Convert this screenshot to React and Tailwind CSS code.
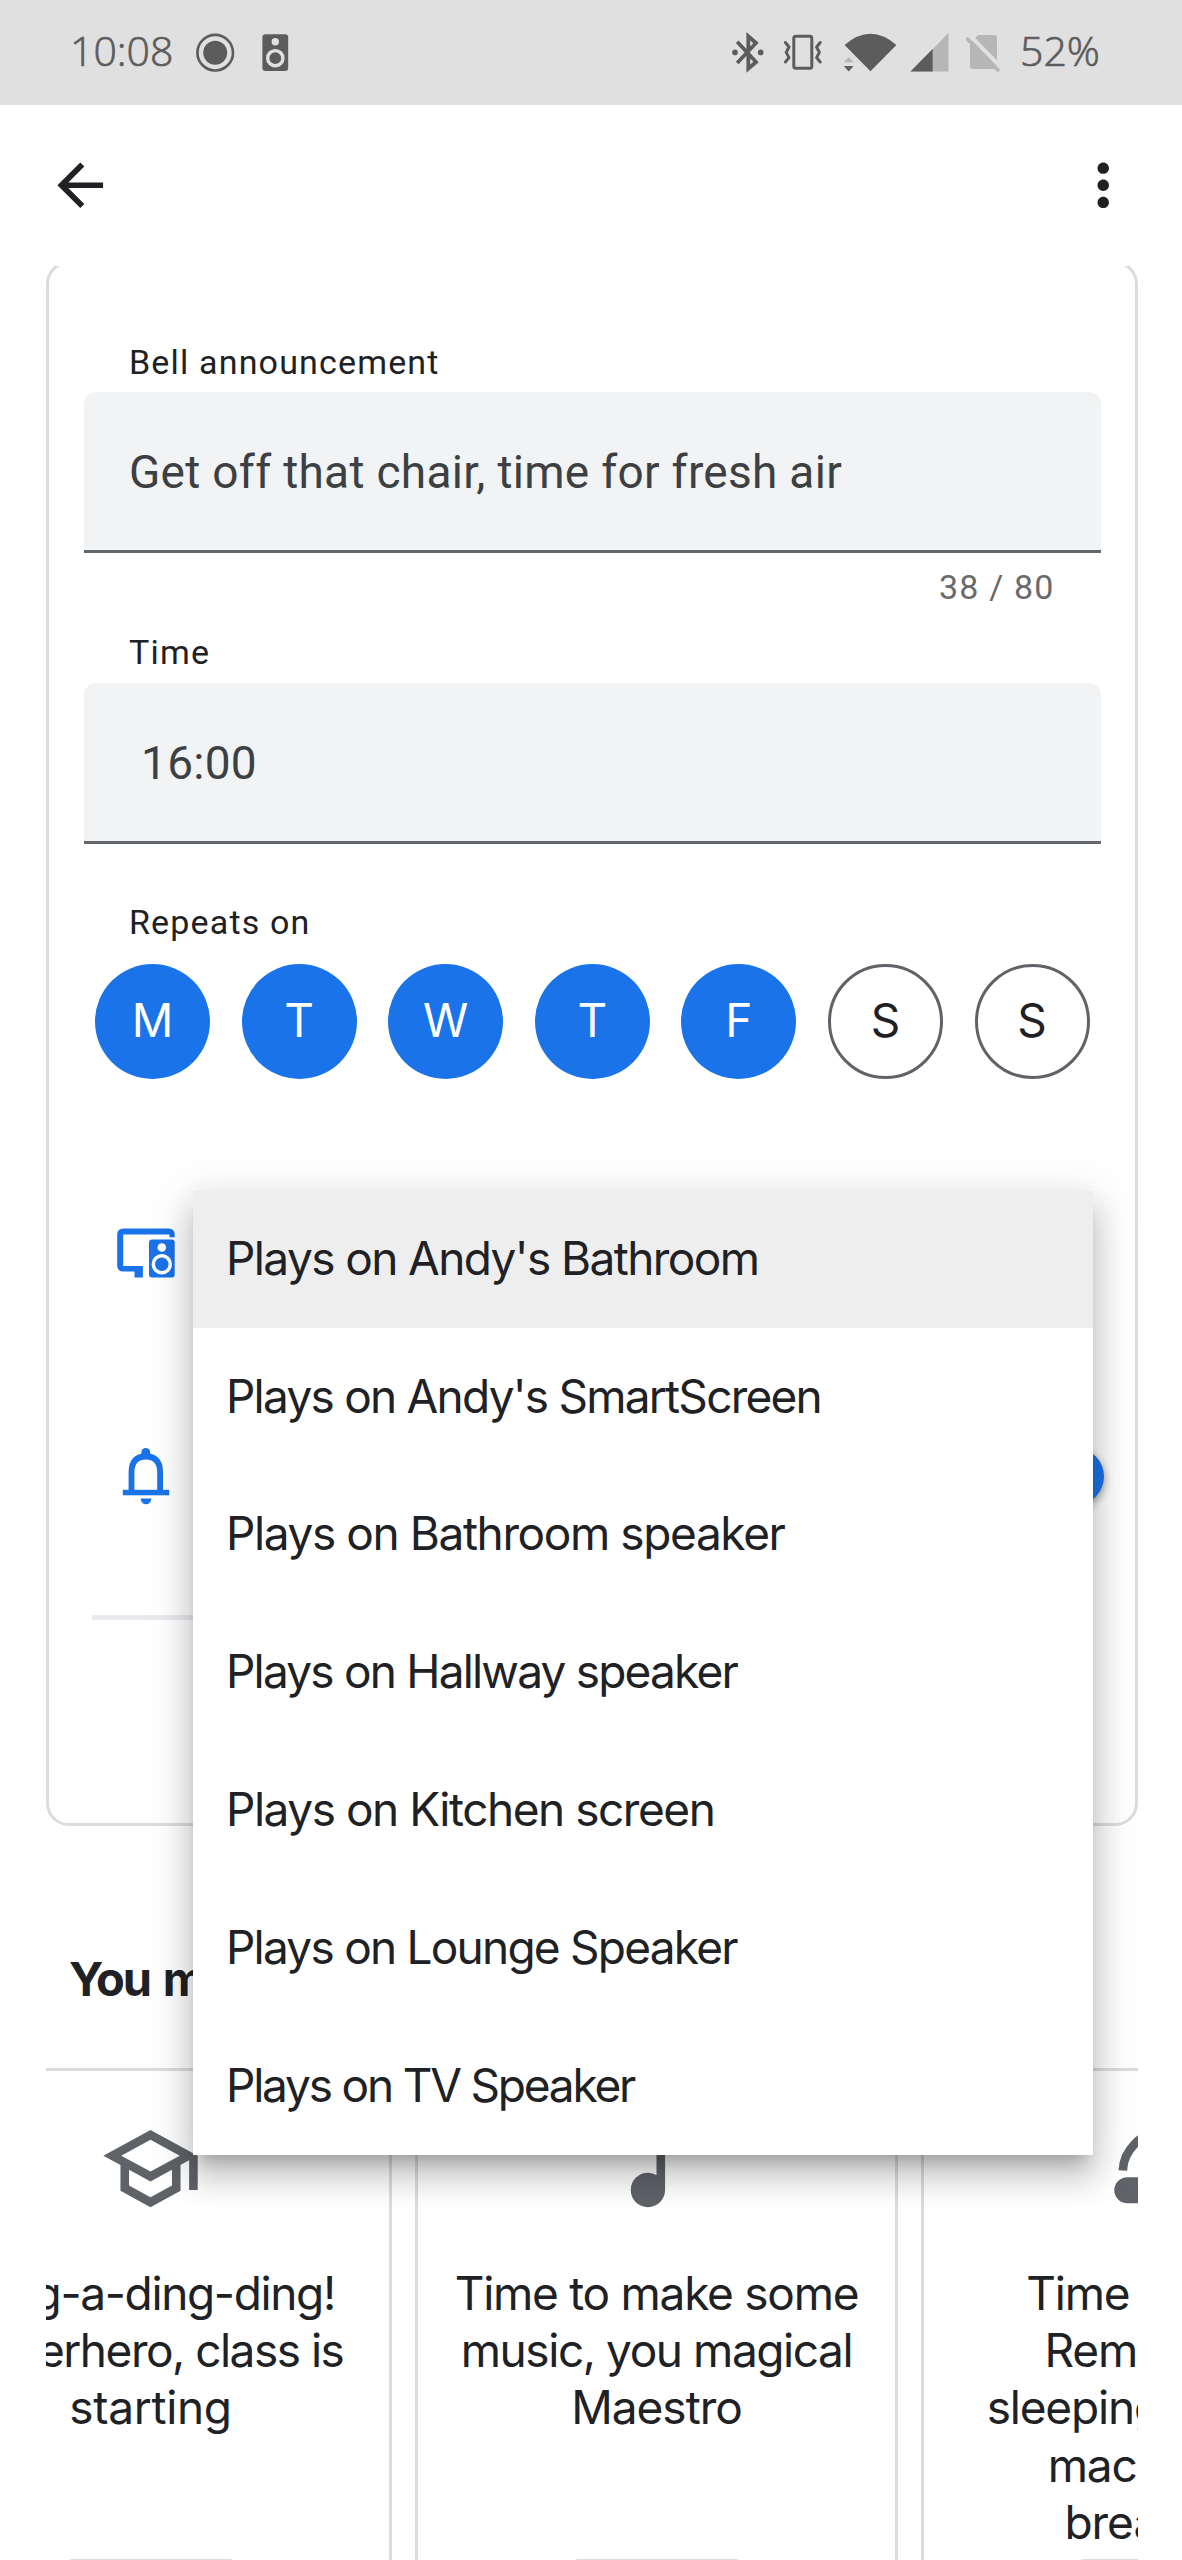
import React from "react";
import { MdArrowBack, MdMoreVert, MdOutlineSchool, MdMusicNote } from "react-icons/md";

const days = [
  { label: "M", on: true },
  { label: "T", on: true },
  { label: "W", on: true },
  { label: "T", on: true },
  { label: "F", on: true },
  { label: "S", on: false },
  { label: "S", on: false },
];

const devices = [
  { name: "Plays on Andy's Bathroom", cls: "tracking-[-1.6px] bg-[#eeeeee]" },
  { name: "Plays on Andy's SmartScreen", cls: "tracking-[-1.76px]" },
  { name: "Plays on Bathroom speaker", cls: "tracking-[-1.4px]" },
  { name: "Plays on Hallway speaker", cls: "tracking-[-1.8px]" },
  { name: "Plays on Kitchen screen", cls: "tracking-[-1.47px]" },
  { name: "Plays on Lounge Speaker", cls: "tracking-[-1.77px]" },
  { name: "Plays on TV Speaker", cls: "tracking-[-2.2px]" },
];

function StatusBar() {
  return (
    <header className="flex h-[105px] w-full items-center justify-between bg-[#e0e0e0] pb-[5px] pl-[70px] pr-[82px] font-['Open_Sans',sans-serif] text-[41px] leading-[60px] text-[#5c5c5c]">
      <div className="flex items-center">
        <span className="w-[124px] font-light [-webkit-text-stroke:0.7px_#5c5c5c]">10:08</span>
        <svg className="mt-[5px]" width="96" height="44" viewBox="194 31 96 44" fill="#5c5c5c">
          <circle cx="215.2" cy="52.7" r="17.8" fill="none" stroke="#5c5c5c" strokeWidth="2.6" />
          <circle cx="215.2" cy="52.7" r="12" />
          <rect x="262.4" y="34.2" width="25.8" height="36.8" rx="3.2" />
          <circle cx="275.3" cy="41.8" r="3.7" fill="#e0e0e0" />
          <circle cx="275.3" cy="58.2" r="7.6" stroke="#e0e0e0" strokeWidth="3.4" />
        </svg>
      </div>
      <div className="flex items-center">
        <svg className="mt-[5px]" width="290" height="44" viewBox="730 31 290 44" fill="#5c5c5c">
          <path d="M737.2 41.8 756 62 748.3 68.6V36.2L756 43 737.2 63" fill="none" stroke="#5c5c5c" strokeWidth="3.8" />
          <circle cx="735" cy="52.4" r="2.8" />
          <circle cx="760.7" cy="52.4" r="2.8" />
          <g fill="none" stroke="#5c5c5c" strokeWidth="3" strokeLinecap="round" strokeLinejoin="round">
            <rect x="793.8" y="36.3" width="18" height="32" rx="2" />
            <path d="M785.4 42.5 789 47 786.2 52.4 789 57.6 785.4 62" />
            <path d="M820.2 42.5 816.6 47 819.4 52.4 816.6 57.6 820.2 62" />
          </g>
          <path d="M870.5 71.3 844.6 45Q870.5 22.5 896.4 45Z" />
          <path d="M848.7 57 853.6 62.2H843.8Z" fill="#b6b6b6" />
          <path d="M848.7 71.4 853.6 66H843.8Z" />
          <path d="M910.5 71.5 948.5 33V71.5Z" fill="#b6b6b6" />
          <path d="M910.5 71.5 932.6 49V71.5Z" />
          <path d="M978 35H994q3 0 3 3V66q0 3-3 3H973q-3 0-3-3V43Z" fill="#b6b6b6" />
          <path d="M969 34.5 1003 69.5" stroke="#e0e0e0" strokeWidth="4" />
          <path d="M967.5 39 998 70" stroke="#b6b6b6" strokeWidth="3.6" strokeLinecap="round" />
        </svg>
        <span className="w-[80px] whitespace-nowrap font-light [-webkit-text-stroke:0.7px_#5c5c5c]">52%</span>
      </div>
    </header>
  );
}

function AppBar() {
  return (
    <nav className="flex h-[161px] items-center justify-between pl-[46px] pr-[45px] text-[#202124]">
      <MdArrowBack className="size-[68.5px]" />
      <MdMoreVert className="size-[68.5px]" />
    </nav>
  );
}

function Label({ children, className }) {
  return (
    <div className={`h-10 pl-[45px] text-[34px] leading-10 tracking-[1.17px] text-[#202124] ${className}`}>
      {children}
    </div>
  );
}

function Field({ children, className }) {
  return (
    <div
      className={`flex h-[161px] items-center rounded-t-[12px] border-b-[3.5px] border-[#63676b] bg-[#f1f3f4] pt-[3px] text-[46px] tracking-[0.29px] text-[#3c4043] ${className}`}
    >
      {children}
    </div>
  );
}

function SpeakerScreenIcon() {
  return (
    <svg width="58" height="50" viewBox="117.5 1228.5 58 50" fill="#1a73e8">
      <path d="M124 1229H169Q175.2 1229 175.2 1235V1237.8H170V1235H123.7V1266.5H143.4V1278H135V1272H124Q117.7 1272 117.7 1266V1235Q117.7 1229 124 1229Z" />
      <rect x="149.5" y="1240" width="25.7" height="38" rx="3" />
      <circle cx="162.3" cy="1248" r="4.3" fill="#fff" />
      <circle cx="162.3" cy="1264.8" r="8.5" stroke="#fff" strokeWidth="3.5" />
    </svg>
  );
}

function BellIcon() {
  return (
    <svg width="48" height="57" viewBox="122.5 1448.5 48 57" fill="#1a73e8">
      <path d="M132 1491V1472Q132.5 1457 146.3 1457Q160.2 1457 160.6 1472V1491" fill="none" stroke="#1a73e8" strokeWidth="5.8" />
      <path d="M141.8 1458V1453a4.5 4.5 0 0 1 9 0V1458Z" />
      <rect x="123.3" y="1490.3" width="46.4" height="5.5" />
      <path d="M141 1499H152Q151 1504.8 146.5 1504.8T141 1499Z" />
    </svg>
  );
}

function RestIcon() {
  return (
    <svg width="103" height="103" viewBox="0 0 103 103" fill="#5f6368">
      <path d="M11.8 53.5C12.5 34 30 14.500 52 14.500S90.5 34 91.2 53.5" fill="none" stroke="#5f6368" strokeWidth="8.6" />
      <rect x="3.3" y="60.2" width="96" height="26" rx="13" />
    </svg>
  );
}

function Suggestion({ icon, children }) {
  return (
    <article className="flex h-[640px] w-[483px] shrink-0 flex-col items-center rounded-[23px] border-[3px] border-[#dadce0] pt-[46px]">
      <div className="size-[103px] text-[103px] text-[#5f6368]">{icon}</div>
      <div className="mt-[45px] h-[294px] text-center text-[46px] leading-[57.4px] text-[#202124]">{children}</div>
      <div className="h-[100px] w-[180px] shrink-0 rounded-[12px] border-[3px] border-[#dadce0]" />
    </article>
  );
}

export default function App() {
  return (
    <div className="relative h-[2560px] w-[1182px] overflow-hidden bg-white font-[Roboto,sans-serif]">
      <StatusBar />
      <AppBar />

      <main className="mx-[46px] h-[2294px] w-[1091.5px] overflow-hidden">
        <section className="mt-[-5px] h-[1565px] rounded-[23px] border-[3px] border-[#dadce0] pl-[35px] pr-[34px] pt-[78px]">
          <Label>Bell announcement</Label>
          <Field className="mt-[10px] pl-[45px]">Get off that chair, time for fresh air</Field>
          <div className="mt-[14px] h-10 pr-[46px] text-right text-[34px] leading-10 tracking-[1.17px] text-[#6a6a6a]">
            38 / 80
          </div>

          <Label className="mt-[25px]">Time</Label>
          <Field className="mt-[10.5px] pl-[57px]">16:00</Field>

          <Label className="mt-[58.5px]">Repeats on</Label>
          <div className="mt-[22px] flex gap-[31.6px] pl-[11px] font-[Inter,sans-serif]">
            {days.map((d, i) => (
              <div
                key={i}
                className={
                  d.on
                    ? "flex size-[115px] items-center justify-center rounded-full bg-[#1a73e8] pb-[2px] text-[46px] text-white"
                    : "flex size-[115px] items-center justify-center rounded-full border-[3px] border-[#5f6368] pb-[2px] text-[46px] text-[#202124]"
                }
              >
                {d.label}
              </div>
            ))}
          </div>

          <div className="mt-[149px] flex h-[50px] pl-[33px]">
            <SpeakerScreenIcon />
          </div>
          <div className="mr-[-3px] mt-[170px] flex h-[57px] justify-between pl-[38px]">
            <BellIcon />
            <div className="size-[57px] rounded-full bg-[#1a73e8] shadow-[0_3px_8px_rgba(0,0,0,0.4)]" />
          </div>
          <div className="mx-2 mt-[109.5px] h-[5.5px] bg-[#e8eaed]" />
        </section>

        <h2 className="mt-[123px] h-[60px] pl-[23px] font-[Inter,sans-serif] text-[47px] font-bold leading-[60px] tracking-[-2.2px] text-[#202124] [word-spacing:4px]">
          You may also like
        </h2>

        <div className="ml-[-137px] mt-[58.5px] flex gap-[23px] font-[Inter,sans-serif]">
          <Suggestion icon={<MdOutlineSchool />}>
            <p className="tracking-[-1.35px]">Ding-a-ding-ding!</p>
            <p className="tracking-[-1.5px]">Superhero, class is</p>
            <p className="tracking-[-0.3px]">starting</p>
          </Suggestion>
          <Suggestion icon={<MdMusicNote />}>
            <p className="tracking-[-1.27px]">Time to make some</p>
            <p className="tracking-[-1.43px]">music, you magical</p>
            <p className="tracking-[-1px]">Maestro</p>
          </Suggestion>
          <Suggestion icon={<RestIcon />}>
            <p className="pr-4 tracking-[-1.2px]">Time to rest.</p>
            <p className="pr-[10px] tracking-[-1.2px]">Remember</p>
            <p className="pr-4 tracking-[-1.2px]">sleeping is like a</p>
            <p className="pr-6 tracking-[-1.2px]">machine’s</p>
            <p className="pr-5 tracking-[-1px]">breather</p>
          </Suggestion>
        </div>
      </main>

      <ul className="absolute left-[193px] top-[1190.5px] w-[900px] bg-white font-[Inter,sans-serif] text-[46px] text-[#202124] shadow-[0_14px_14px_-8px_rgba(0,0,0,0.2),0_23px_29px_3px_rgba(0,0,0,0.14),0_9px_40px_6px_rgba(0,0,0,0.12)]">
        {devices.map((d) => (
          <li key={d.name} className={`flex h-[137.8px] items-center pb-[2px] pl-[33px] ${d.cls}`}>
            {d.name}
          </li>
        ))}
      </ul>
    </div>
  );
}
